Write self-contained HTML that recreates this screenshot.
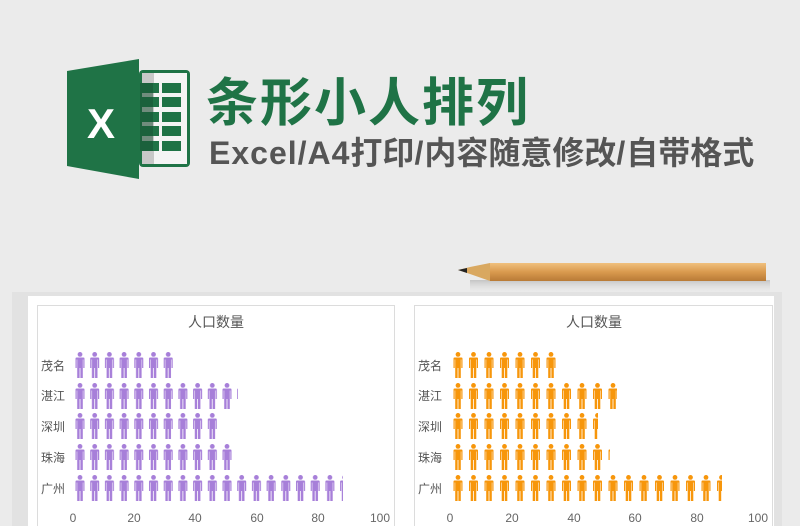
<!DOCTYPE html>
<html><head><meta charset="utf-8">
<style>
html,body{margin:0;padding:0}
body{width:800px;height:526px;background:#ebebeb;position:relative;overflow:hidden;font-family:"Liberation Sans","Noto Sans CJK SC",sans-serif}
.t1{position:absolute;left:206px;top:64px;font-size:52px;font-weight:bold;color:#1f7346;letter-spacing:2px;line-height:70px;font-family:"Noto Sans CJK SC",sans-serif;white-space:nowrap}
.t2{position:absolute;left:209px;top:128px;font-size:32px;color:#555;line-height:46px;font-family:"Liberation Sans","Noto Sans CJK SC",sans-serif;font-weight:bold;white-space:nowrap}
.t2 .l{letter-spacing:1px}
.t2 .c{font-family:"Noto Sans CJK SC",sans-serif;font-weight:bold;font-size:32px}
</style></head><body>
<svg width="800" height="526" style="position:absolute;left:0;top:0">
<defs>
<linearGradient id="pc" x1="0" y1="0" x2="0" y2="1"><stop offset="0" stop-color="#f0c07e"/><stop offset=".5" stop-color="#d99a4e"/><stop offset="1" stop-color="#b87a36"/></linearGradient>
<linearGradient id="ps" x1="0" y1="0" x2="0" y2="1"><stop offset="0" stop-color="#aaa" stop-opacity=".6"/><stop offset="1" stop-color="#ebebeb" stop-opacity="0"/></linearGradient>
<g id="man">
<circle cx="5" cy="2.4" r="2.4"/>
<path d="M1.5 5.5h7a1 1 0 0 1 1 1V16H8.3V7.5h-.5V26H5.4V16h-.8V26H2.2V7.5h-.5V16H.5V6.5a1 1 0 0 1 1-1z"/>
</g>
<pattern id="pL" patternUnits="userSpaceOnUse" x="75" y="0" width="14.7" height="526"><use href="#man" fill="#a77fd9"/></pattern>
<pattern id="pR" patternUnits="userSpaceOnUse" x="453" y="0" width="15.5" height="526"><use href="#man" fill="#f7960b"/></pattern>
</defs>
<rect x="470" y="280" width="300" height="14" fill="url(#ps)"/>
<rect x="12" y="292" width="770" height="240" fill="#dcdcdc" opacity=".6"/>
<rect x="28" y="296" width="746" height="240" fill="#fff"/>
<rect x="37.5" y="305.5" width="357" height="230" fill="#fff" stroke="#dcdcdc"/>
<rect x="414.5" y="305.5" width="358" height="230" fill="#fff" stroke="#dcdcdc"/>
<polygon points="458,270 470,267 490,263 490,281 470,274" fill="#d9a860"/>
<polygon points="458,270 467,268 467,273" fill="#222"/>
<rect x="490" y="263" width="276" height="18" fill="url(#pc)"/>
<rect x="139" y="70" width="51" height="97" rx="4" fill="#1f7346"/>
<rect x="142" y="73" width="45" height="91" fill="#f4f4f4"/>
<rect x="142" y="73" width="12" height="91" fill="#c8c8c8"/>
<g fill="#1f7346">
<rect x="140" y="83" width="19" height="10"/><rect x="162" y="83" width="19" height="10"/>
<rect x="140" y="97" width="19" height="10"/><rect x="162" y="97" width="19" height="10"/>
<rect x="140" y="112" width="19" height="10"/><rect x="162" y="112" width="19" height="10"/>
<rect x="140" y="126" width="19" height="10"/><rect x="162" y="126" width="19" height="10"/>
<rect x="140" y="141" width="19" height="10"/><rect x="162" y="141" width="19" height="10"/>
</g>
<g fill="#174f31" opacity=".5"><rect x="140" y="83" width="13" height="68"/></g>
<polygon points="67,71 139,59 139,179 67,166" fill="#1f7346"/>
<text x="101" y="138" font-family="Liberation Sans" font-weight="bold" font-size="42" fill="#fff" text-anchor="middle">X</text>
<g font-family="Liberation Sans,Noto Sans CJK SC,sans-serif" font-size="13" fill="#555">
<text x="216" y="327" text-anchor="middle" font-size="14">人口数量</text>
<text x="594" y="327" text-anchor="middle" font-size="14">人口数量</text>
<g font-size="12">
<text x="41" y="370">茂名</text><text x="41" y="400">湛江</text><text x="41" y="431">深圳</text><text x="41" y="462">珠海</text><text x="41" y="493">广州</text>
<text x="418" y="370">茂名</text><text x="418" y="400">湛江</text><text x="418" y="431">深圳</text><text x="418" y="462">珠海</text><text x="418" y="493">广州</text>
</g>
<g text-anchor="middle" font-size="12" fill="#666">
<text x="73" y="522">0</text><text x="134" y="522">20</text><text x="195" y="522">40</text><text x="257" y="522">60</text><text x="318" y="522">80</text><text x="380" y="522">100</text>
<text x="450" y="522">0</text><text x="512" y="522">20</text><text x="574" y="522">40</text><text x="635" y="522">60</text><text x="697" y="522">80</text><text x="758" y="522">100</text>
</g>
</g>
<svg x="0" y="352" width="800" height="26"><rect x="75" y="0" width="98" height="26" fill="url(#pL)"/><rect x="453" y="0" width="103" height="26" fill="url(#pR)"/></svg>
<svg x="0" y="383" width="800" height="26"><rect x="75" y="0" width="163" height="26" fill="url(#pL)"/><rect x="453" y="0" width="164" height="26" fill="url(#pR)"/></svg>
<svg x="0" y="413" width="800" height="26"><rect x="75" y="0" width="142" height="26" fill="url(#pL)"/><rect x="453" y="0" width="145" height="26" fill="url(#pR)"/></svg>
<svg x="0" y="444" width="800" height="26"><rect x="75" y="0" width="157" height="26" fill="url(#pL)"/><rect x="453" y="0" width="157" height="26" fill="url(#pR)"/></svg>
<svg x="0" y="475" width="800" height="26"><rect x="75" y="0" width="268" height="26" fill="url(#pL)"/><rect x="453" y="0" width="269" height="26" fill="url(#pR)"/></svg>
</svg>
<div class="t1">条形小人排列</div>
<div class="t2"><span class="l">Excel/A4</span><span class="c">打印</span><span class="l">/</span><span class="c">内容随意修改</span><span class="l">/</span><span class="c">自带格式</span></div>
</body></html>
